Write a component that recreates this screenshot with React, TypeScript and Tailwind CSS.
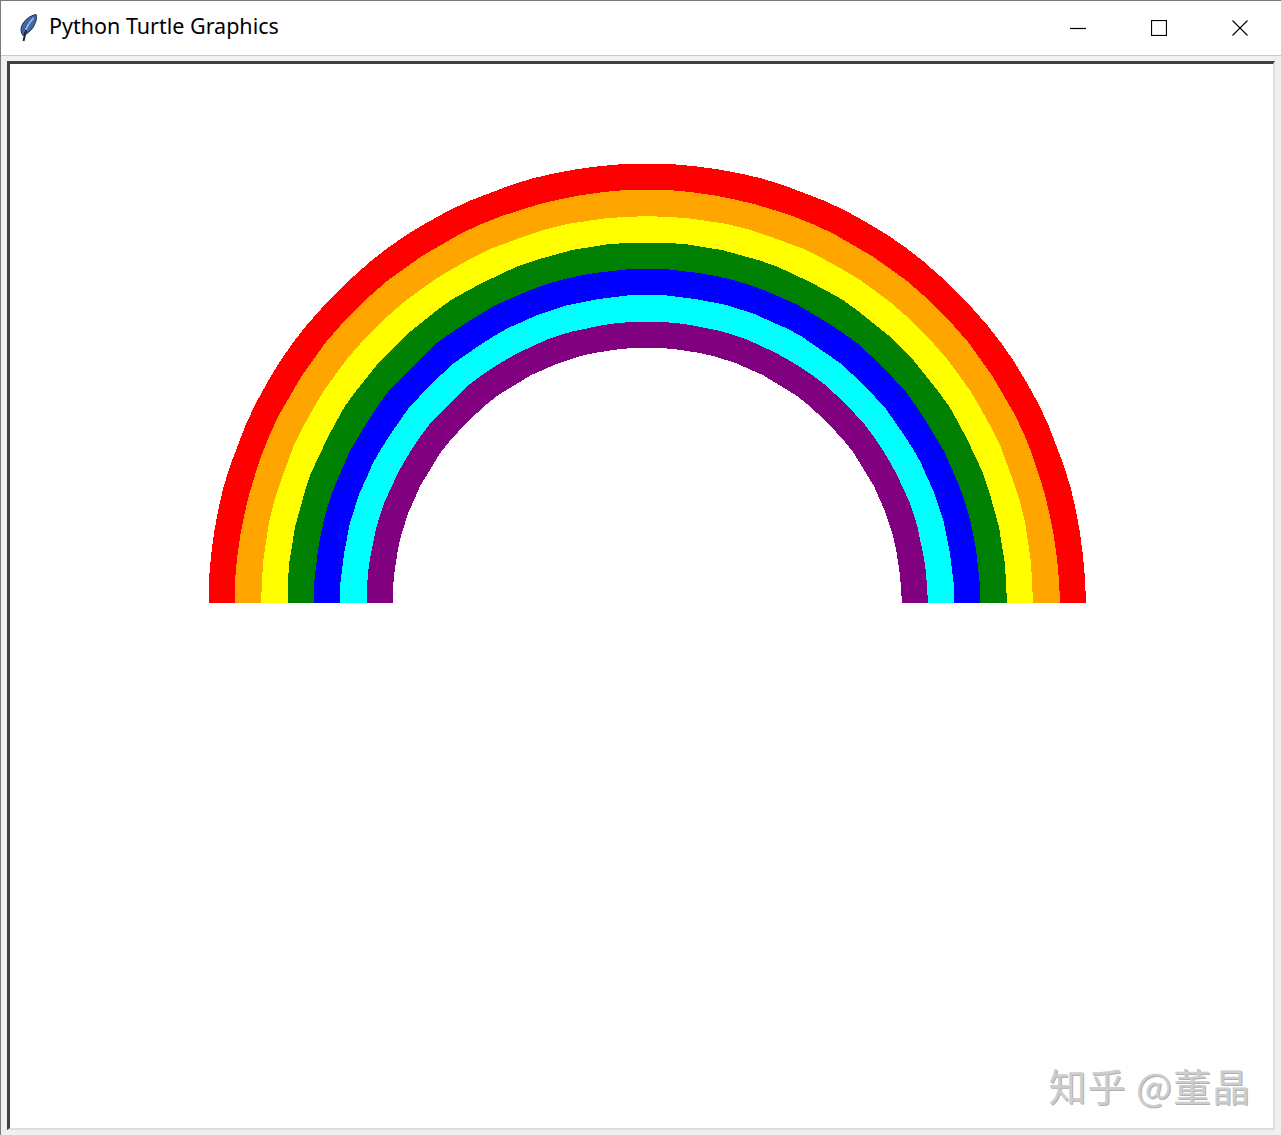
import React from 'react';

const bands = [
  { color: '#ff0000', r: 438.5 },
  { color: '#ffa500', r: 412.5 },
  { color: '#ffff00', r: 386 },
  { color: '#008000', r: 359.5 },
  { color: '#0000ff', r: 333 },
  { color: '#00ffff', r: 307 },
  { color: '#800080', r: 280.5 },
  { color: '#ffffff', r: 254.5 },
];

// half disc centred on the base line, a short straight step per 3 degrees like the turtle walk
const halfDisc = (r: number) => {
  const cx = 440;
  const cy = 441;
  const pts: string[] = [`${Math.round(cx - r)},${cy + 1}`];
  for (let a = 0; a <= 180; a += 3) {
    const rad = (a * Math.PI) / 180;
    pts.push(`${Math.round(cx - r * Math.cos(rad))},${Math.round(cy - r * Math.sin(rad))}`);
  }
  pts.push(`${Math.round(cx + r)},${cy + 1}`);
  return pts.join(' ');
};

const Feather = () => (
  <svg width="20" height="28" viewBox="0 0 20 28" className="shrink-0">
    <path d="M17 0.500C11 1.500 4.500 6.500 2.500 12.500C1.500 16 2 19 4 21.500C9.500 19.500 14 15 16 9.500C17.500 6 18 3 17 0.500Z" fill="#3f67a6" stroke="#1f2f4d" strokeWidth="1" />
    <path d="M14.500 4C10.500 8.500 7.500 13.500 6 18" fill="none" stroke="#a9c0e4" strokeWidth="1.500" />
    <path d="M7 16L4.500 27" fill="none" stroke="#222" strokeWidth="2" />
  </svg>
);

const App: React.FC = () => {
  return (
    <div className="w-[1281px] h-[1135px] flex flex-col overflow-hidden bg-[#f0f0f0] border-t border-l border-[#7a7a7a]">
      <div className="h-[55px] shrink-0 flex items-center justify-between bg-white border-b border-[#c9c9c9]">
        <div className="flex items-center gap-[10px] pl-[18px]">
          <Feather />
          <span className="text-[21.5px] leading-none pb-[5px] text-black font-['Noto_Sans','Open_Sans',sans-serif]">Python Turtle Graphics</span>
        </div>
        <div className="flex items-center pb-[1px] pr-[1px]">
          <div className="w-[81px] flex justify-center">
            <svg width="16" height="16" viewBox="0 0 16 16"><path d="M0 8.500H16" stroke="#000" strokeWidth="1.200" /></svg>
          </div>
          <div className="w-[81px] flex justify-center">
            <svg width="16" height="16" viewBox="0 0 16 16"><rect x="0.500" y="0.500" width="15" height="15" fill="none" stroke="#000" strokeWidth="1.200" /></svg>
          </div>
          <div className="w-[81px] flex justify-center">
            <svg width="16" height="16" viewBox="0 0 16 16"><path d="M0.500 0.500L15.500 15.500M15.500 0.500L0.500 15.500" stroke="#000" strokeWidth="1.100" /></svg>
          </div>
        </div>
      </div>
      <div className="flex-1 pt-[5px] pl-[6px] pr-[6px] pb-[5px] flex">
        <div className="relative flex-1 bg-white border-t-[3px] border-l-[3px] border-r-[2px] border-b-[2px] border-t-[#404040] border-l-[#404040] border-r-[#dedede] border-b-[#dedede]">
          <svg width="880" height="445" viewBox="0 0 880 445" shapeRendering="crispEdges" className="ml-[197px] mt-[97px]">
            {bands.map((b) => (
              <polygon key={b.color} points={halfDisc(b.r)} fill={b.color} />
            ))}
          </svg>
          <div className="absolute right-[22px] bottom-[24px] text-[38px] leading-none tracking-[1px] text-[#cdcdcd] [text-shadow:1px_1px_0_#b0b0b0] font-['Noto_Sans_CJK_SC',sans-serif] whitespace-pre">知乎 @董晶</div>
        </div>
      </div>
    </div>
  );
};

export default App;
